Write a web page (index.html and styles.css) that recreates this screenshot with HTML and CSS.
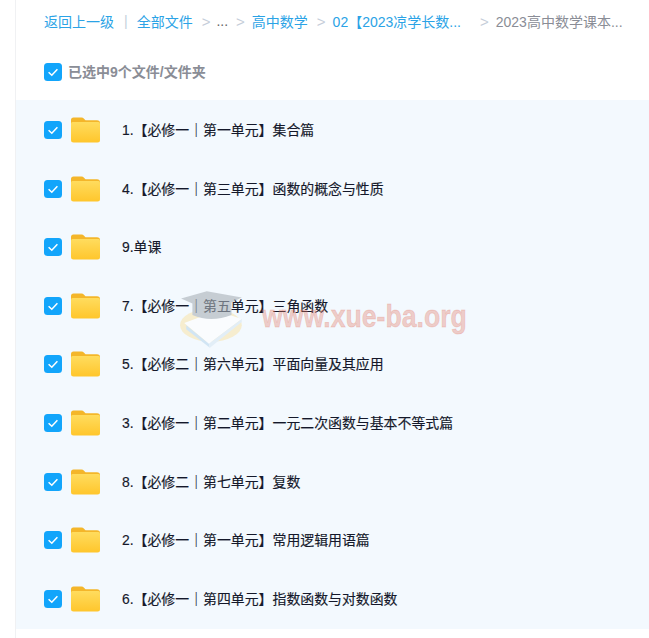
FILE: index.html
```html
<!DOCTYPE html>
<html>
<head>
<meta charset="utf-8">
<title>文件列表</title>
<link rel="stylesheet" href="styles.css">
</head>
<body>
<svg class="defs" width="0" height="0">
  <defs>
    <linearGradient id="folderBody" x1="0" y1="0" x2="0" y2="1">
      <stop offset="0" stop-color="#ffdc5e"/>
      <stop offset="1" stop-color="#ffc62c"/>
    </linearGradient>
    <symbol id="check" viewBox="0 0 18 18">
      <rect width="18" height="18" rx="3.5" fill="#12a5fb"/>
      <path d="M4.6 9.2 L7.8 12.3 L13.4 6.2" fill="none" stroke="#fff" stroke-width="1.5"/>
    </symbol>
    <symbol id="folder" viewBox="0 0 29 26">
      <path d="M0 3 Q0 0.5 2.5 0.5 L10.5 0.5 Q12 0.5 13 1.7 L14.5 3.2 L26 3.2 Q29 3.2 29 6 L29 12 L0 12 Z" fill="#f4b62a"/>
      <path d="M0 6.5 Q0 5 1.5 5 L27.5 5 Q29 5 29 6.5 L29 23 Q29 25.5 26.5 25.5 L2.5 25.5 Q0 25.5 0 23 Z" fill="url(#folderBody)"/>
    </symbol>
  </defs>
</svg>
<div class="page">
  <div class="crumbs">
    <a class="link">返回上一级</a>
    <span class="bar">|</span>
    <a class="link">全部文件</a>
    <span class="sep">&gt;</span>
    <span class="dots">...</span>
    <span class="sep">&gt;</span>
    <a class="link">高中数学</a>
    <span class="sep">&gt;</span>
    <a class="link">02【2023凉学长数...</a>
    <span class="sep sep-wide">&gt;</span>
    <span class="current">2023高中数学课本...</span>
  </div>
  <div class="selected">
    <svg class="check"><use href="#check"/></svg>
    <span>已选中9个文件/文件夹</span>
  </div>
  <div class="list">
    <div class="row"><svg class="check"><use href="#check"/></svg><svg class="folder"><use href="#folder"/></svg><span class="name">1.【必修一｜第一单元】集合篇</span></div>
    <div class="row"><svg class="check"><use href="#check"/></svg><svg class="folder"><use href="#folder"/></svg><span class="name">4.【必修一｜第三单元】函数的概念与性质</span></div>
    <div class="row"><svg class="check"><use href="#check"/></svg><svg class="folder"><use href="#folder"/></svg><span class="name">9.单课</span></div>
    <div class="row"><svg class="check"><use href="#check"/></svg><svg class="folder"><use href="#folder"/></svg><span class="name">7.【必修一｜第五单元】三角函数</span></div>
    <div class="row"><svg class="check"><use href="#check"/></svg><svg class="folder"><use href="#folder"/></svg><span class="name">5.【必修二｜第六单元】平面向量及其应用</span></div>
    <div class="row"><svg class="check"><use href="#check"/></svg><svg class="folder"><use href="#folder"/></svg><span class="name">3.【必修一｜第二单元】一元二次函数与基本不等式篇</span></div>
    <div class="row"><svg class="check"><use href="#check"/></svg><svg class="folder"><use href="#folder"/></svg><span class="name">8.【必修二｜第七单元】复数</span></div>
    <div class="row"><svg class="check"><use href="#check"/></svg><svg class="folder"><use href="#folder"/></svg><span class="name">2.【必修一｜第一单元】常用逻辑用语篇</span></div>
    <div class="row"><svg class="check"><use href="#check"/></svg><svg class="folder"><use href="#folder"/></svg><span class="name">6.【必修一｜第四单元】指数函数与对数函数</span></div>
  </div>
</div>
<!-- watermark over the list -->
<div class="mark">
  <svg class="mark-logo" viewBox="0 0 70 60">
    <ellipse cx="32" cy="36" rx="30" ry="16" fill="#f8e6b0"/>
    <path d="M6 34 L38 22 L62 30 L30 54 Z" fill="#fff"/>
    <path d="M8 36 L30 54 L31 58 L8 40 Z" fill="#bcd8ee"/>
    <path d="M30 54 L62 30 L62 33 L31 58 Z" fill="#d8e8f4"/>
    <path d="M3 10 L28 3 L62 9 L52 14 L52 26 Q32 34 14 26 L14 15 Z" fill="#a9b1b8"/>
  </svg>
  <span class="mark-text">www.xue-ba.org</span>
</div>
</body>
</html>
```
FILE: styles.css
```css
html, body {
  margin: 0;
  padding: 0;
  background: #fff;
}
body {
  width: 649px;
  height: 638px;
  overflow: hidden;
  position: relative;
  font-family: "Liberation Sans", "Noto Sans CJK SC", sans-serif;
  font-size: 14px;
}
.defs {
  position: absolute;
}
.page {
  margin-left: 15px;
  height: 638px;
  border-left: 1px solid #f0f1f3;
}
.crumbs {
  height: 42px;
  padding: 0 0 2px 28px;
  display: flex;
  align-items: center;
  white-space: nowrap;
}
.link {
  color: #2ba3e6;
}
.bar {
  color: #c4d0dc;
  margin: 0 9px 0 10px;
}
.sep {
  color: #c5cdd9;
  margin: 0 7px 0 9px;
  font-size: 15px;
}
.sep-wide {
  margin-left: 19px;
  margin-right: 7px;
}
.dots {
  color: #666;
  margin-right: -1px;
  margin-left: -1px;
}
.current {
  color: #8a8d96;
}
.selected {
  height: 56px;
  padding-left: 28px;
  display: flex;
  align-items: center;
  color: #8a8d96;
  font-size: 14px;
  font-weight: bold;
}
.selected span {
  margin: -2px 0 0 6px;
}
.check {
  width: 18px;
  height: 18px;
  flex: none;
}
.list {
  background: #f3f9fe;
  height: 529px;
  padding-top: 0.7px;
  box-sizing: border-box;
}
.row {
  height: 58.6px;
  padding-left: 28px;
  display: flex;
  align-items: center;
}
.folder {
  width: 29px;
  height: 26px;
  flex: none;
  margin-left: 9px;
}
.name {
  margin: -2px 0 0 22px;
  color: #14182a;
  font-size: 13.9px;
  -webkit-text-stroke: 0.15px #14182a;
}
.mark {
  position: absolute;
  left: 178px;
  top: 288px;
  display: flex;
  align-items: center;
  pointer-events: none;
}
.mark-logo {
  width: 72px;
  height: 62px;
  opacity: 0.6;
}
.mark-text {
  margin: -4px 0 0 12px;
  color: rgba(226, 120, 100, 0.36);
  font-family: "Liberation Sans", sans-serif;
  font-size: 31px;
  font-weight: bold;
  -webkit-text-stroke: 0.8px rgba(226, 120, 100, 0.25);
  transform: scaleX(0.86);
  transform-origin: left center;
}
```
